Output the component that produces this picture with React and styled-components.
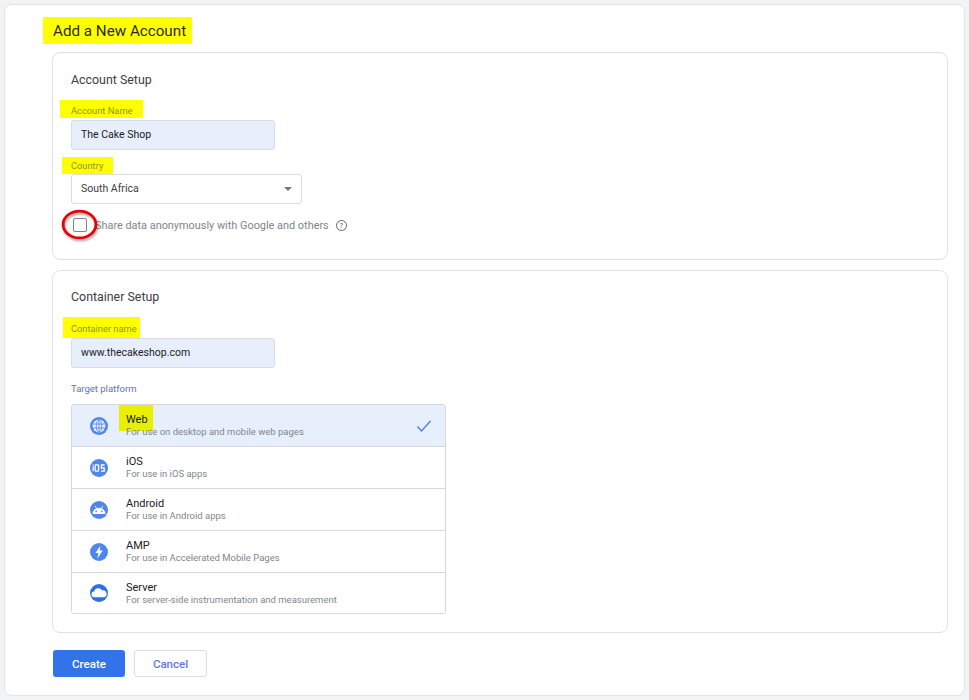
import React from "react";
import styled, { createGlobalStyle } from "styled-components";

const GlobalStyle = createGlobalStyle`
  html, body {
    margin: 0;
    background: #f1f3f4;
    font-family: Roboto, "Liberation Sans", sans-serif;
  }
`;

const GlobeIcon = () => (
  <svg width="20" height="20" viewBox="0 0 20 20">
    <circle cx="10" cy="10" r="9" fill="#4f86ec" />
    <circle cx="10" cy="10" r="6.4" fill="#eef3fd" />
    <g fill="none" stroke="#4f86ec" strokeWidth="0.9">
      <ellipse cx="10" cy="10" rx="2.8" ry="6.2" />
      <path d="M3.8 8h12.4M3.8 12h12.4M10 3.8v12.4" />
    </g>
  </svg>
);

const IosIcon = () => (
  <svg width="20" height="20" viewBox="0 0 20 20">
    <circle cx="10" cy="10" r="9" fill="#4f86ec" />
    <g fill="none" stroke="#fff" strokeWidth="1.3">
      <path d="M4.2 8.4v4.8M4.2 6.4v1" />
      <rect x="6.2" y="6.9" width="3.4" height="6.2" rx="0.7" />
      <path d="M15.6 7h-3.2v3h2.9v3.1h-3.3" />
    </g>
  </svg>
);

const AndroidIcon = () => (
  <svg width="20" height="20" viewBox="0 0 20 20">
    <circle cx="10" cy="10" r="9" fill="#4f86ec" />
    <path d="M3.6 14a6.4 6.2 0 0 1 12.8 0z" fill="#fff" />
    <path d="M6.2 6l1.4 2.4M13.8 6l-1.4 2.4" stroke="#fff" strokeWidth="0.9" />
    <circle cx="7.2" cy="11.4" r="0.8" fill="#4f86ec" />
    <circle cx="12.8" cy="11.4" r="0.8" fill="#4f86ec" />
  </svg>
);

const AmpIcon = () => (
  <svg width="20" height="20" viewBox="0 0 20 20">
    <circle cx="10" cy="10" r="9" fill="#4f86ec" />
    <path d="M11.4 3.8L6.4 11h3l-1 5.4 5.4-7.8h-3.1z" fill="#fff" />
  </svg>
);

const CloudIcon = () => (
  <svg width="20" height="20" viewBox="0 0 20 20">
    <circle cx="10" cy="10" r="9" fill="#2f6fe0" />
    <path
      d="M5.4 14.2a2.8 2.8 0 0 1-.2-5.6 4.2 4.2 0 0 1 7.9-1 3.4 3.4 0 0 1 2.1 6.6z"
      fill="#fff"
    />
  </svg>
);

const platforms = [
  { name: "Web", text: "For use on desktop and mobile web pages", Icon: GlobeIcon, selected: true },
  { name: "iOS", text: "For use in iOS apps", Icon: IosIcon },
  { name: "Android", text: "For use in Android apps", Icon: AndroidIcon },
  { name: "AMP", text: "For use in Accelerated Mobile Pages", Icon: AmpIcon },
  { name: "Server", text: "For server-side instrumentation and measurement", Icon: CloudIcon },
];

const App = () => {
  return (
    <Page>
      <GlobalStyle />
      <Card>
        <Title>Add a New Account</Title>

        <Section $height={208}>
          <SectionTitle>Account Setup</SectionTitle>
          <MarkedLabel>Account Name</MarkedLabel>
          <TextInput>The Cake Shop</TextInput>
          <MarkedLabel $country>Country</MarkedLabel>
          <Select>
            South Africa
            <Caret />
          </Select>
          <CheckRow>
            <Checkbox />
            <Ring width="42" height="36" viewBox="0 0 42 36">
              <ellipse cx="20.5" cy="16.5" rx="16.4" ry="13.4" fill="none" stroke="#e8000b" strokeWidth="2.8" />
            </Ring>
            <CheckText>Share data anonymously with Google and others</CheckText>
            <Help>?</Help>
          </CheckRow>
        </Section>

        <Section $height={363} $second>
          <SectionTitle>Container Setup</SectionTitle>
          <MarkedLabel $container>Container name</MarkedLabel>
          <TextInput>www.thecakeshop.com</TextInput>
          <PlainLabel>Target platform</PlainLabel>
          <PlatformList>
            {platforms.map(({ name, text, Icon, selected }) => (
              <Platform key={name} $selected={selected}>
                <IconSlot>
                  <Icon />
                </IconSlot>
                <PlatformBody>
                  <PlatformName $marked={selected}>{name}</PlatformName>
                  <PlatformText>{text}</PlatformText>
                </PlatformBody>
                {selected && (
                  <Tick width="16" height="14" viewBox="0 0 16 14">
                    <path d="M1.5 7.5l4 4.5L14.5 2" fill="none" stroke="#4f7fe0" strokeWidth="1.4" />
                  </Tick>
                )}
              </Platform>
            ))}
          </PlatformList>
        </Section>

        <Actions>
          <CreateButton>Create</CreateButton>
          <CancelButton>Cancel</CancelButton>
        </Actions>
      </Card>
    </Page>
  );
};

export default App;

const Page = styled.div`
  width: 969px;
  height: 700px;
  padding: 4px;
  box-sizing: border-box;
  overflow: hidden;
`;

const Card = styled.div`
  width: 961px;
  height: 692px;
  box-sizing: border-box;
  padding: 12px 16px 0 47px;
  background: #fff;
  border: 1px solid #e2e4e7;
  border-radius: 8px;
`;

const Title = styled.h1`
  display: inline-block;
  margin: 0 0 0 -9px;
  padding: 0 6px 0 10px;
  height: 27px;
  line-height: 29px;
  background: #ffff00;
  font-size: 15.2px;
  font-weight: 400;
  color: #2b2b1c;
  vertical-align: top;
`;

const Section = styled.section`
  height: ${({ $height }) => $height}px;
  box-sizing: border-box;
  margin-top: ${({ $second }) => ($second ? 10 : 8)}px;
  padding: ${({ $second }) => ($second ? 18 : 19)}px 18px 0;
  border: 1px solid #dfe1e5;
  border-radius: 8px;
`;

const SectionTitle = styled.h2`
  margin: 0;
  height: 15px;
  line-height: 15px;
  font-size: 12.4px;
  font-weight: 400;
  color: #3c4043;
`;

const MarkedLabel = styled.label`
  display: block;
  width: fit-content;
  box-sizing: border-box;
  background: #ffff00;
  font-size: 9.3px;
  color: #8d9422;
  ${({ $country, $container }) =>
    $country
      ? "margin: 7px 0 0 -9px; padding: 0 10px 0 9px; height: 17px; line-height: 18px;"
      : $container
        ? "margin: 13px 0 -2px -8px; padding: 0 3px 0 8px; height: 21px; line-height: 23px;"
        : "margin: 13px 0 0 -11px; padding: 0 11px; height: 18px; line-height: 22px;"}
`;

const PlainLabel = styled.div`
  margin-top: 15px;
  height: 12px;
  line-height: 12px;
  font-size: 9.5px;
  color: #5f6fd0;
`;

const TextInput = styled.div`
  width: 204px;
  height: 30px;
  margin-top: 2px;
  box-sizing: border-box;
  padding-left: 9px;
  line-height: 27px;
  font-size: 10.5px;
  color: #202124;
  background: #e8effc;
  border: 1px solid #dadce0;
  border-radius: 3px;
`;

const Select = styled.div`
  display: flex;
  align-items: center;
  justify-content: space-between;
  width: 231px;
  height: 30px;
  box-sizing: border-box;
  padding: 0 9px 2px 9px;
  font-size: 10.5px;
  color: #3c4043;
  background: #fff;
  border: 1px solid #dadce0;
  border-radius: 3px;
`;

const Caret = styled.span`
  width: 0;
  height: 0;
  margin-top: 2px;
  border-left: 4.5px solid transparent;
  border-right: 4.5px solid transparent;
  border-top: 4.5px solid #757575;
`;

const CheckRow = styled.div`
  position: relative;
  display: flex;
  align-items: center;
  height: 16px;
  margin-top: 13px;
`;

const Checkbox = styled.span`
  width: 14px;
  height: 14px;
  margin-left: 2px;
  box-sizing: border-box;
  border: 1px solid #80868b;
  border-radius: 2px;
`;

const Ring = styled.svg`
  position: absolute;
  left: -12px;
  top: -9px;
  filter: drop-shadow(1px 2px 1px rgba(0, 0, 0, 0.35));
`;

const CheckText = styled.span`
  margin-left: 8px;
  font-size: 10.9px;
  color: #80868b;
`;

const Help = styled.span`
  width: 9px;
  height: 9px;
  margin-left: 7px;
  border: 1px solid #5f6368;
  border-radius: 50%;
  text-align: center;
  font-size: 7.5px;
  line-height: 9px;
  color: #5f6368;
`;

const PlatformList = styled.div`
  width: 373px;
  margin-top: 9px;
  border: 1px solid #d5d7db;
  border-radius: 3px;
  overflow: hidden;
`;

const Platform = styled.div`
  display: flex;
  align-items: center;
  height: 41px;
  background: ${({ $selected }) => ($selected ? "#e8effc" : "#fff")};
  border-bottom: 1px solid #d5d7db;

  &:last-child {
    height: 40px;
    border-bottom: 0;
  }
`;

const IconSlot = styled.div`
  display: flex;
  width: 54px;
  padding-left: 17px;
  box-sizing: border-box;
`;

const PlatformBody = styled.div`
  flex: 1;
`;

const PlatformName = styled.div`
  width: fit-content;
  font-size: 11px;
  height: 13px;
  line-height: 13px;
  color: #202124;
  ${({ $marked }) =>
    $marked &&
    "background: #e8f000; margin: -8px 0 -5px -7px; padding: 8px 5px 5px 7px;"}
`;

const PlatformText = styled.div`
  position: relative;
  font-size: 9.5px;
  height: 12px;
  line-height: 12px;
  color: #80868b;
`;

const Tick = styled.svg`
  margin-right: 13px;
`;

const Actions = styled.div`
  display: flex;
  gap: 9px;
  margin-top: 17px;
  padding-left: 1px;
`;

const CreateButton = styled.button`
  width: 72px;
  height: 27px;
  padding: 0;
  font-family: Roboto, sans-serif;
  font-size: 11.5px;
  font-weight: 500;
  color: #fff;
  background: #3273ea;
  border: 0;
  border-radius: 3px;
`;

const CancelButton = styled.button`
  width: 73px;
  height: 27px;
  padding: 0;
  font-family: Roboto, sans-serif;
  font-size: 11.5px;
  font-weight: 500;
  color: #5f78e0;
  background: #fff;
  border: 1px solid #dadce0;
  border-radius: 3px;
`;
